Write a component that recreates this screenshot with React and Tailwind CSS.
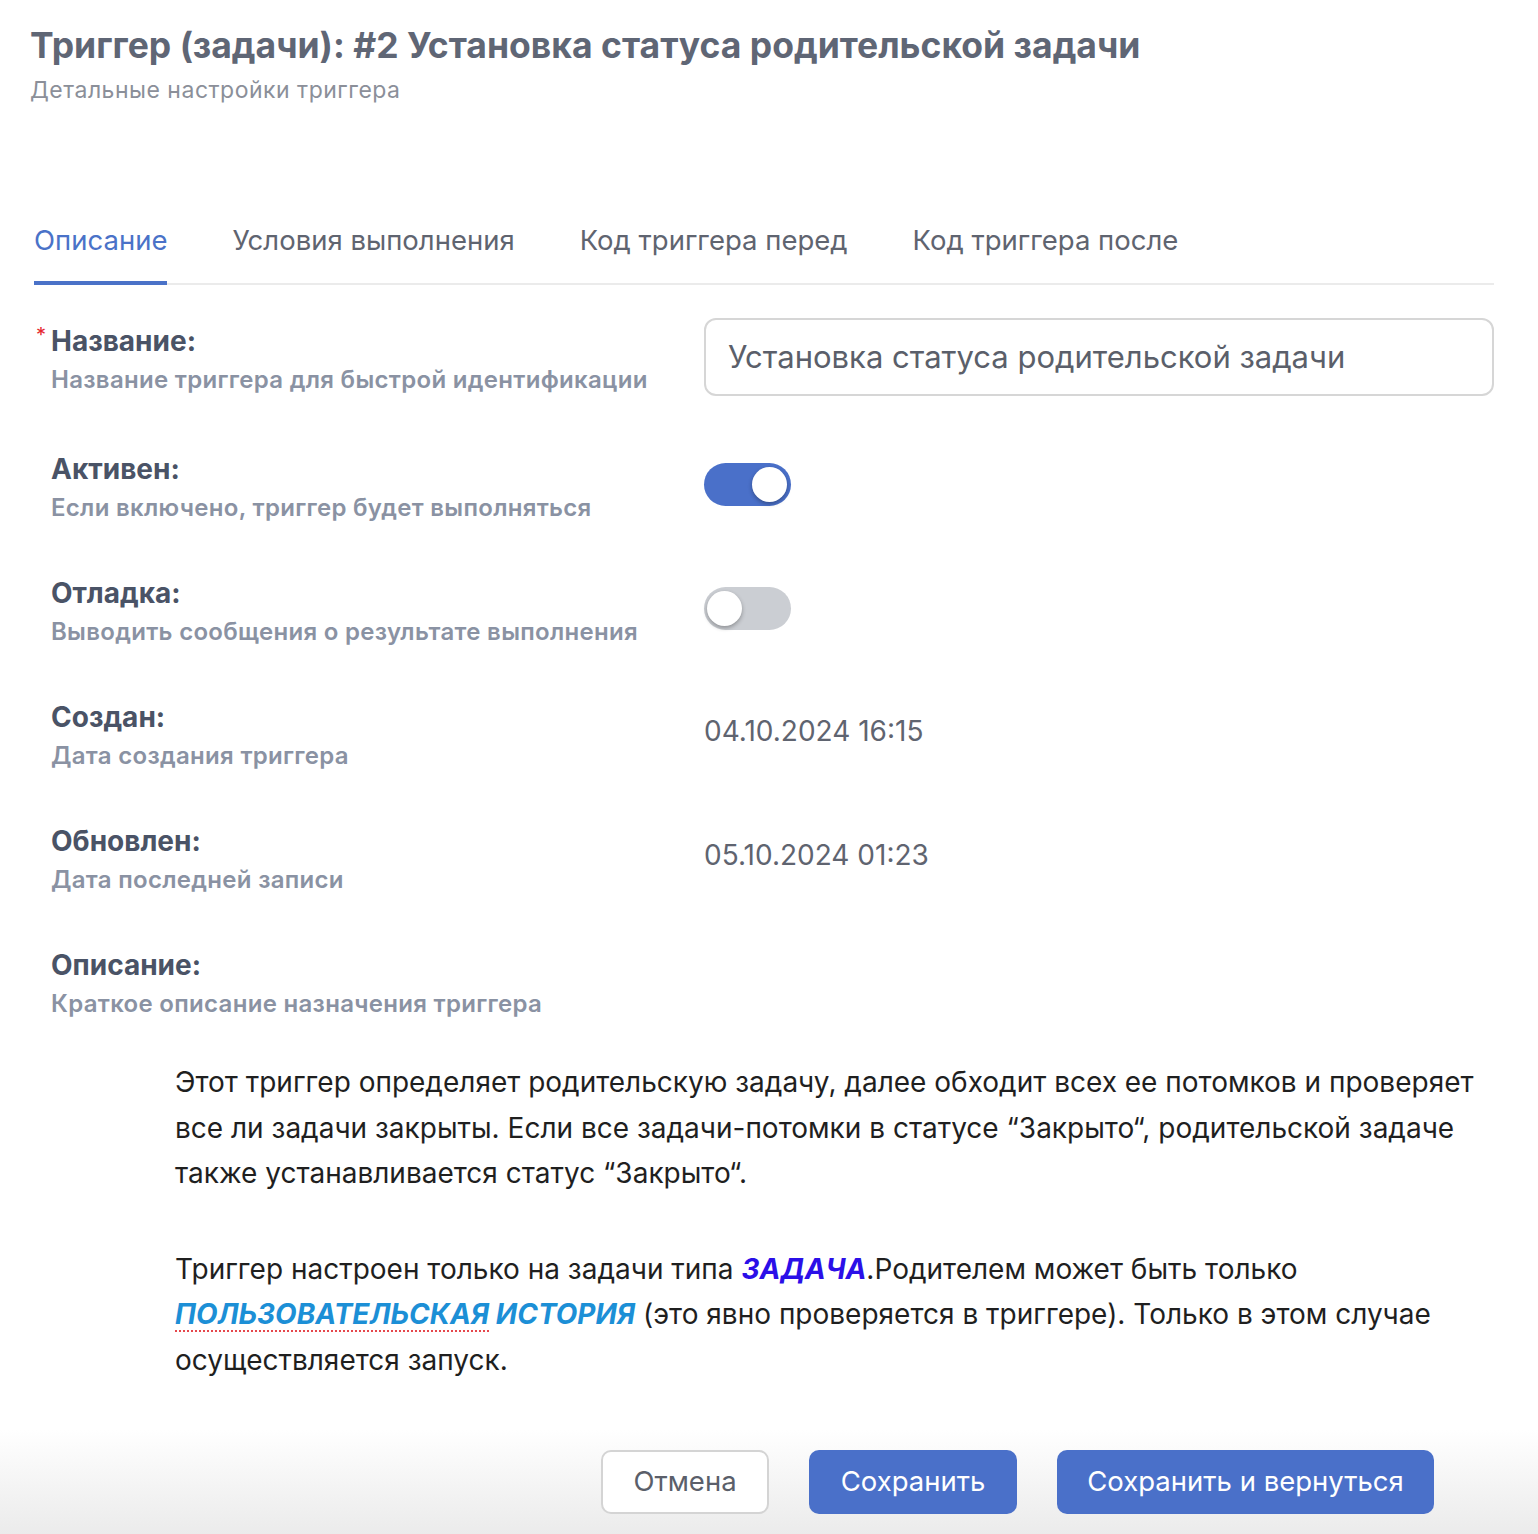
import React, { useState } from 'react';

const tabs = ['Описание', 'Условия выполнения', 'Код триггера перед', 'Код триггера после'];

function Toggle({ on, onChange }) {
  return (
    <button
      type="button"
      onClick={onChange}
      className={`relative w-[87px] h-[43px] rounded-full transition-colors ${on ? 'bg-[#4a70c9]' : 'bg-[#cbced3]'}`}
    >
      <span
        className={`absolute top-[4px] w-[35px] h-[35px] rounded-full bg-white shadow-[0_2px_4px_rgba(0,0,0,0.3)] transition-all ${on ? 'left-[48px]' : 'left-[3px]'}`}
      />
    </button>
  );
}

function Row({ label, hint, required, tall, children }) {
  return (
    <div className={`flex ${tall ? 'min-h-[128px]' : 'min-h-[124px]'}`}>
      <div className="w-[674px] shrink-0 relative pl-[21px] pt-[8px]">
        {required && <span className="absolute left-[6px] top-[10px] text-[#e5262f] text-[20px] leading-none">*</span>}
        <div className="text-[28px] font-bold text-[#4a5366] leading-[36px]">{label}</div>
        <div className="text-[24px] font-semibold text-[#8a92a3] leading-[32px] mt-[5px] tracking-[0.3px]">{hint}</div>
      </div>
      {children && <div className="flex-1">{children}</div>}
    </div>
  );
}

export default function App() {
  const [tab, setTab] = useState(0);
  const [active, setActive] = useState(true);
  const [debug, setDebug] = useState(false);

  return (
    <div className="min-h-[1534px] bg-white font-['Inter',sans-serif] relative">
      <div className="px-[30px] pt-[24px]">
        <h1 className="text-[35.5px] font-bold text-[#5f6675] leading-[44px]">Триггер (задачи): #2 Установка статуса родительской задачи</h1>
        <p className="text-[23px] text-[#8b8f99] leading-[28px] mt-[8px] tracking-[0.5px]">Детальные настройки триггера</p>
      </div>

      <div className="ml-[34px] mr-[44px] mt-[118px] flex gap-[65px] border-b-2 border-[#ebebeb]">
        {tabs.map((t, i) => (
          <button
            key={t}
            onClick={() => setTab(i)}
            className={`pb-[23px] text-[27.5px] leading-[36px] -mb-[2px] border-b-4 ${i === tab ? 'text-[#4a72c8] border-[#4a72c8]' : 'text-[#5f6470] border-transparent'}`}
          >
            {t}
          </button>
        ))}
      </div>

      <div className="pl-[30px] pr-[44px] pt-[30px]">
        <Row label="Название:" hint="Название триггера для быстрой идентификации" required tall>
          <div className="mt-[3px] h-[78px] border-2 border-[#d6d6d6] rounded-[12px] flex items-center px-[22px] text-[31px] text-[#5b5f6a]">
            Установка статуса родительской задачи
          </div>
        </Row>
        <Row label="Активен:" hint="Если включено, триггер будет выполняться">
          <div className="pt-[20px]"><Toggle on={active} onChange={() => setActive(!active)} /></div>
        </Row>
        <Row label="Отладка:" hint="Выводить сообщения о результате выполнения">
          <div className="pt-[20px]"><Toggle on={debug} onChange={() => setDebug(!debug)} /></div>
        </Row>
        <Row label="Создан:" hint="Дата создания триггера">
          <div className="pt-[22px] text-[28px] leading-[36px] text-[#5f6470]">04.10.2024 16:15</div>
        </Row>
        <Row label="Обновлен:" hint="Дата последней записи">
          <div className="pt-[22px] text-[28px] leading-[36px] text-[#5f6470]">05.10.2024 01:23</div>
        </Row>
        <div className="flex">
          <div className="w-[674px] shrink-0 pl-[21px] pt-[8px]">
            <div className="text-[28px] font-bold text-[#4a5366] leading-[36px]">Описание:</div>
            <div className="text-[24px] font-semibold text-[#8a92a3] leading-[32px] mt-[5px] tracking-[0.3px]">Краткое описание назначения триггера</div>
          </div>
        </div>
      </div>

      <div className="pl-[175px] pr-[43px] mt-[40px] text-[28px] leading-[45.5px] text-[#1f1f1f]">
        <p>Этот триггер определяет родительскую задачу, далее обходит всех ее потомков и проверяет все ли задачи закрыты. Если все задачи-потомки в статусе “Закрыто“, родительской задаче также устанавливается статус “Закрыто“.</p>
        <p className="h-[50px]">&nbsp;</p>
        <p>
          Триггер настроен только на задачи типа <b className="italic text-[#2b0fe8]">ЗАДАЧА</b>.Родителем может быть только{' '}
          <b className="italic text-[#1c8fd6]"><span className="underline decoration-dotted decoration-[#e5484d] decoration-2 underline-offset-[6px]">ПОЛЬЗОВАТЕЛЬСКАЯ</span> ИСТОРИЯ</b> (это явно проверяется в триггере). Только в этом случае осуществляется запуск.
        </p>
      </div>

      <div className="absolute left-0 right-0 bottom-0 h-[104px] bg-gradient-to-b from-white to-[#ebebeb] flex items-center justify-end gap-[40px] pr-[104px]">
        <button className="w-[168px] h-[64px] rounded-[10px] border-2 border-[#d4d4d4] bg-white text-[27.5px] text-[#5b5f6a]">Отмена</button>
        <button className="w-[208px] h-[64px] rounded-[10px] bg-[#4a70c9] text-[27.5px] text-white">Сохранить</button>
        <button className="w-[377px] h-[64px] rounded-[10px] bg-[#4a70c9] text-[27.5px] text-white">Сохранить и вернуться</button>
      </div>
    </div>
  );
}
